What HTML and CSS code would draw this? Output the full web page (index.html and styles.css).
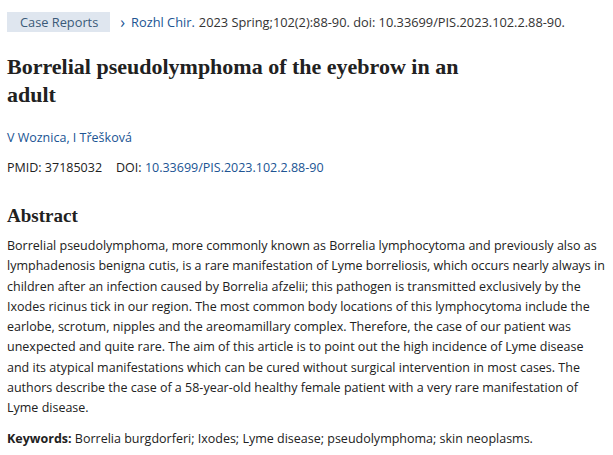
FILE: index.html
```html
<!DOCTYPE html>
<html>
<head>
<meta charset="utf-8">
<link rel="stylesheet" href="styles.css">
</head>
<body>
<div class="page">
  <div class="cite">
    <span class="badge">Case Reports</span>
    <span class="chev">&#x203A;</span>
    <span class="journal">Rozhl Chir.</span>
    <span class="ref">2023 Spring;102(2):88-90. doi: 10.33699/PIS.2023.102.2.88-90.</span>
  </div>
  <h1 class="title">Borrelial pseudolymphoma of the eyebrow in an adult</h1>
  <div class="authors"><a>V Woznica</a>, <a>I Třešková</a></div>
  <div class="ids"><span>PMID: 37185032</span><span>DOI: <a>10.33699/PIS.2023.102.2.88-90</a></span></div>
  <h2 class="abs-h">Abstract</h2>
  <p class="abs">Borrelial pseudolymphoma, more commonly known as Borrelia lymphocytoma and previously also as lymphadenosis benigna cutis, is a rare manifestation of Lyme borreliosis, which occurs nearly always in children after an infection caused by Borrelia afzelii; this pathogen is transmitted exclusively by the Ixodes ricinus tick in our region. The most common body locations of this lymphocytoma include the earlobe, scrotum, nipples and the areomamillary complex. Therefore, the case of our patient was unexpected and quite rare. The aim of this article is to point out the high incidence of Lyme disease and its atypical manifestations which can be cured without surgical intervention in most cases. The authors describe the case of a 58-year-old healthy female patient with a very rare manifestation of Lyme disease.</p>
  <p class="kw"><b>Keywords:</b> Borrelia burgdorferi; Ixodes; Lyme disease; pseudolymphoma; skin neoplasms.</p>
</div>
</body>
</html>
```

FILE: styles.css
```css
html, body { margin: 0; padding: 0; background: #fff; }
.page {
  padding: 12px 7px 0 7px;
  font-family: "Open Sans", "Noto Sans", sans-serif;
  font-size: 12.5px;
  color: #212121;
}
.cite { display: flex; align-items: center; height: 20px; white-space: nowrap; font-size: 12.8px; }
.badge {
  background: #dfe6ef;
  color: #3a5a78;
  padding: 0 12px 0 13px;
  height: 20px;
  line-height: 20px;
  margin-right: 10px;
}
.chev { color: #205493; font-size: 16px; margin-right: 6px; line-height: 20px; }
.journal { color: #205493; margin-right: 4px; }
.ref { color: #333; }
.title {
  font-family: "Liberation Serif", serif;
  font-weight: bold;
  font-size: 22px;
  line-height: 28px;
  margin: 21px 0 0 0;
  color: #212121;
  width: 470px;
}
.authors { margin-top: 19px; color: #205493; line-height: 20px; }
.authors a, .ids a { color: #205493; }
.ids { margin-top: 10px; line-height: 20px; display: flex; gap: 14px; }
.abs-h {
  font-family: "Liberation Serif", serif;
  font-weight: bold;
  font-size: 19px;
  line-height: 24px;
  margin: 26px 0 0 0;
  color: #212121;
}
.abs { margin: 8px 0 0 0; line-height: 20.3px; }
.kw { margin: 10px 0 0 0; line-height: 20px; }
.kw b { font-weight: bold; }
```
